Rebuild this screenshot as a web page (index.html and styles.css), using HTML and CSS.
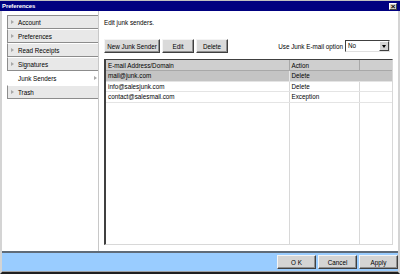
FILE: index.html
```html
<!DOCTYPE html>
<html lang="en">
<head>
    <meta charset="UTF-8">
    <title>Preferences</title>
    <link rel="stylesheet" href="styles.css">
</head>
<body>
    <div class="window">
        <div class="titlebar">
            <span class="title">Preferences</span>
            <span class="close">&#215;</span>
        </div>

        <div class="main">
            <!-- left menu -->
            <ul class="nav">
                <li class="nav-item"><span class="arrow"></span>Account</li>
                <li class="nav-item"><span class="arrow"></span>Preferences</li>
                <li class="nav-item"><span class="arrow"></span>Read Receipts</li>
                <li class="nav-item"><span class="arrow"></span>Signatures</li>
                <li class="nav-item active"><span class="label">Junk Senders</span><span class="arrow"></span></li>
                <li class="nav-item"><span class="arrow"></span>Trash</li>
            </ul>

            <div class="content">
                <p class="intro">Edit junk senders.</p>
                <div class="toolbar">
                    <div class="btns">
                        <button class="btn btn-new">New Junk Sender</button>
                        <button class="btn btn-edit">Edit</button>
                        <button class="btn btn-delete">Delete</button>
                    </div>
                    <div class="option">
                        <span>Use Junk E-mail option</span>
                        <span class="select">
                            <span class="select-value">No</span>
                            <span class="select-arrow"></span>
                        </span>
                    </div>
                </div>

                <div class="grid">
                    <table>
                        <tr class="head">
                            <th class="col-addr">E-mail Address/Domain</th>
                            <th class="col-action">Action</th>
                            <th class="col-end"></th>
                        </tr>
                        <tr class="selected">
                            <td>mail@junk.com</td>
                            <td>Delete</td>
                            <td></td>
                        </tr>
                        <tr>
                            <td>info@salesjunk.com</td>
                            <td>Delete</td>
                            <td></td>
                        </tr>
                        <tr>
                            <td>contact@salesmail.com</td>
                            <td>Exception</td>
                            <td></td>
                        </tr>
                        <tr class="filler">
                            <td></td>
                            <td></td>
                            <td></td>
                        </tr>
                    </table>
                </div>
            </div>
        </div>

        <div class="footer">
            <button class="btn btn-ok">O K</button>
            <button class="btn btn-foot">Cancel</button>
            <button class="btn btn-foot">Apply</button>
        </div>
    </div>
</body>
</html>
```

FILE: styles.css
```css
* {
    box-sizing: border-box;
}
body {
    margin: 0;
    padding: 0;
    font-family: "Liberation Sans", Arial, sans-serif;
    font-size: 6.3px;
    color: #000;
    background-color: #000;
}
.window {
    width: 400px;
    height: 274px;
    display: flex;
    flex-direction: column;
    background-color: #fff;
    border-left: 2px solid #d4d4d4;
    border-right: 2px solid #d4d4d4;
    border-bottom: 2px solid #202020;
}
.titlebar {
    height: 11px;
    margin: 0 -2px;
    padding: 0 3px 0 2px;
    display: flex;
    align-items: center;
    justify-content: space-between;
    background-color: #000080;
    color: #fff;
    border-top: 1px solid #c0c0c0;
}
.title {
    font-size: 6px;
    font-weight: bold;
    letter-spacing: -0.1px;
}
.close {
    width: 8px;
    height: 7px;
    background-color: #d4d0c8;
    color: #000;
    font-size: 8px;
    font-weight: bold;
    line-height: 6px;
    text-align: center;
    border: 1px solid;
    border-color: #fff #404040 #404040 #fff;
}
.main {
    flex: 1;
    display: flex;
}
/* left menu */
.nav {
    width: 97px;
    margin: 0;
    padding: 4px 0 0 5px;
    list-style: none;
    border-right: 1px solid #c8c8c8;
}
.nav-item {
    height: 14px;
    display: flex;
    align-items: center;
    background-color: #e8e8e8;
    border-left: 1px solid #8c8c8c;
    border-top: 1px solid #fff;
    border-bottom: 1px solid #8c8c8c;
}
.nav-item:first-child {
    border-top: 1px solid #8c8c8c;
}
.arrow {
    width: 0;
    height: 0;
    margin: 0 4px 0 3px;
    border-left: 3px solid #a8a8a8;
    border-top: 2.5px solid transparent;
    border-bottom: 2.5px solid transparent;
}
.nav-item.active {
    background-color: #fff;
    border-color: #fff;
    justify-content: space-between;
    padding-left: 10px;
}
.nav-item.active .arrow {
    margin: 0 1px 0 0;
}
/* right side */
.content {
    flex: 1;
    display: flex;
    flex-direction: column;
    padding: 7px 5px 6px 5px;
}
.intro {
    margin: 0 0 11px 0;
    height: 10px;
    line-height: 10px;
}
.toolbar {
    display: flex;
    justify-content: space-between;
    align-items: center;
    height: 14px;
    margin-bottom: 6px;
}
.btns {
    display: flex;
    gap: 2px;
}
.btn {
    height: 14px;
    padding: 0;
    font-family: inherit;
    font-size: 6.3px;
    color: #000;
    background-color: #dadada;
    border: 1px solid;
    border-color: #f4f4f4 #404040 #404040 #f4f4f4;
    box-shadow: inset -1px -1px #909090;
}
.btn-new {
    width: 56px;
}
.btn-edit {
    width: 32px;
}
.btn-delete {
    width: 32px;
}
.option {
    display: flex;
    align-items: center;
    gap: 2px;
    padding-right: 3px;
}
.select {
    width: 45px;
    height: 12px;
    display: flex;
    justify-content: space-between;
    background-color: #fff;
    border: 1px solid;
    border-color: #404040 #e0e0e0 #e0e0e0 #404040;
}
.select-value {
    padding: 1px 0 0 2px;
}
.select-arrow {
    width: 10px;
    height: 10px;
    position: relative;
    background-color: #d4d4d4;
    border: 1px solid;
    border-color: #fff #404040 #404040 #fff;
}
.select-arrow::after {
    content: "";
    position: absolute;
    left: 2px;
    top: 3px;
    border-top: 3px solid #000;
    border-left: 2.5px solid transparent;
    border-right: 2.5px solid transparent;
}
/* address table */
.grid {
    flex: 1;
    display: flex;
    border: 1px solid;
    border-color: #404040 #d8d8d8 #d8d8d8 #404040;
    border-left-width: 2px;
}
table {
    width: 100%;
    height: 100%;
    border-collapse: collapse;
}
th, td {
    height: 10.5px;
    padding: 0 0 0 2px;
    text-align: left;
    font-weight: normal;
    white-space: nowrap;
    border-right: 1px solid #d8d8d8;
    border-bottom: 1px solid #e4e4e4;
}
th:last-child, td:last-child {
    border-right: none;
}
.head th {
    background-color: #cfcfcf;
    border-right: 1px solid #a8a8a8;
    border-bottom: 1px solid #a8a8a8;
}
.head th:last-child {
    border-right: none;
}
.col-addr {
    width: 183px;
}
.col-action {
    width: 70px;
}
.selected td {
    background-color: #c4c4c4;
    border-right-color: #c4c4c4;
}
.selected td:first-child {
    border-right-color: #e8e8e8;
}
.filler td {
    height: auto;
    border-bottom: none;
}
/* bottom bar */
.footer {
    height: 21px;
    display: flex;
    justify-content: flex-end;
    align-items: center;
    gap: 2px;
    padding: 0 0 0 0;
    background-color: #99ccff;
    border-top: 2px solid #5f6b78;
    border-bottom: 1px solid #a0a0a0;
}
.btn-ok, .btn-foot {
    width: 39px;
    height: 14px;
    background-color: #d4d4d4;
}
```
